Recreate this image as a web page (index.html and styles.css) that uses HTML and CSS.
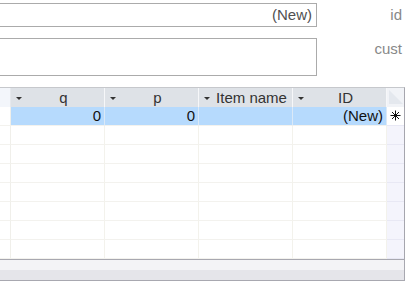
FILE: index.html
```html
<!DOCTYPE html>
<html>
<head>
<meta charset="utf-8">
<link rel="stylesheet" href="styles.css">
</head>
<body>
<div class="form">
  <div class="field field-id">
    <div class="box box-id">(New)</div>
    <div class="label">id</div>
  </div>
  <div class="field field-cust">
    <div class="box box-cust"></div>
    <div class="label">cust</div>
  </div>
</div>
<div class="grid">
  <div class="row head">
    <div class="c rh"></div>
    <div class="c col"><span class="dd"></span><span class="ht">q</span></div>
    <div class="c col"><span class="dd"></span><span class="ht">p</span></div>
    <div class="c col"><span class="dd"></span><span class="ht">Item name</span></div>
    <div class="c col"><span class="dd"></span><span class="ht">ID</span></div>
    <div class="c corner"><svg width="17" height="18" viewBox="0 0 17 18"><polygon points="2,2 16,16 2,16" fill="#e4e8ee"/></svg></div>
  </div>
  <div class="row sel">
    <div class="c rh"></div>
    <div class="c col num">0</div>
    <div class="c col num">0</div>
    <div class="c col num"></div>
    <div class="c col num">(New)</div>
    <div class="c ind"><svg width="11" height="11" viewBox="0 0 11 11"><g stroke="#111" stroke-width="1"><line x1="5.5" y1="0.5" x2="5.5" y2="10.5"/><line x1="0.5" y1="5.5" x2="10.5" y2="5.5"/><line x1="2" y1="2" x2="9" y2="9"/><line x1="9" y1="2" x2="2" y2="9"/></g></svg></div>
  </div>
  <div class="row"><div class="c rh"></div><div class="c col"></div><div class="c col"></div><div class="c col"></div><div class="c col"></div><div class="c rt"></div></div>
  <div class="row"><div class="c rh"></div><div class="c col"></div><div class="c col"></div><div class="c col"></div><div class="c col"></div><div class="c rt"></div></div>
  <div class="row"><div class="c rh"></div><div class="c col"></div><div class="c col"></div><div class="c col"></div><div class="c col"></div><div class="c rt"></div></div>
  <div class="row"><div class="c rh"></div><div class="c col"></div><div class="c col"></div><div class="c col"></div><div class="c col"></div><div class="c rt"></div></div>
  <div class="row"><div class="c rh"></div><div class="c col"></div><div class="c col"></div><div class="c col"></div><div class="c col"></div><div class="c rt"></div></div>
  <div class="row"><div class="c rh"></div><div class="c col"></div><div class="c col"></div><div class="c col"></div><div class="c col"></div><div class="c rt"></div></div>
  <div class="row"><div class="c rh"></div><div class="c col"></div><div class="c col"></div><div class="c col"></div><div class="c col"></div><div class="c rt"></div></div>
  <div class="hscroll"><div class="hs-top"></div><div class="hs-bot"></div></div>
</div>
</body>
</html>
```
FILE: styles.css
```css
* { box-sizing: border-box; }
html, body { margin: 0; padding: 0; background: #fff; }
body {
  font-family: "Liberation Sans", Arial, sans-serif;
  font-size: 15px;
  width: 412px;
  height: 294px;
  overflow: hidden;
}
.form { padding-top: 3px; }
.field { display: flex; align-items: flex-start; }
.field-cust { margin-top: 11px; }
.box {
  width: 317px;
  border: 1px solid #ababab;
  border-left: none;
  background: #fff;
  color: #505050;
  text-align: right;
  padding-right: 4px;
}
.box-id { height: 24px; line-height: 22px; }
.box-cust { height: 38px; }
.label {
  width: 85px;
  text-align: right;
  color: #888;
  padding-top: 3px;
  line-height: 17px;
}
.field-cust .label { padding-top: 2px; }
.grid {
  margin-top: 11px;
  width: 405px;
  border-top: 1px solid #c6c8cc;
  border-right: 1px solid #a6a6ae;
}
.row { display: flex; height: 19px; }
.c { height: 19px; flex: none; }
.rh { width: 11px; border-right: 1px solid #f0efea; border-bottom: 1px solid #f3f2ee; }
.col { width: 94px; border-right: 1px solid #f3f2ec; border-bottom: 1px solid #f3f2ee; }
.rt { width: 17px; background: #f4f4fc; border-bottom: 1px solid #e8e8f4; }
.head .c { border-bottom: none; }
.head .rh { background: #f3f6fb; border-right: 1px solid #e6e9ee; }
.head .col {
  background: #dee2e7;
  border-right: 1px solid #f6f7f9;
  position: relative;
  display: flex;
  align-items: center;
  justify-content: center;
  padding-left: 12px;
  color: #333;
}
.dd {
  position: absolute;
  left: 5px;
  top: 9px;
  width: 0; height: 0;
  border-left: 3px solid transparent;
  border-right: 3px solid transparent;
  border-top: 3px solid #333;
}
.ht { line-height: 19px; }
.corner { width: 17px; background: #f1f3f7; }
.corner svg { display: block; }
.sel .col {
  background: #b6dafd;
  border-right: 1px solid #dbe9f7;
  border-bottom: 1px solid #f3f2ee;
}
.sel .rh { background: #fff; }
.num { text-align: right; padding-right: 3px; line-height: 18px; color: #111; }
.ind {
  width: 17px;
  display: flex;
  align-items: center;
  justify-content: center;
  padding-bottom: 1px;
  border-bottom: 1px solid #e8e8f4;
}
.ind svg { display: block; }
.hscroll {
  height: 22px;
  border-top: 1px solid #a8a8b0;
  border-bottom: 1px solid #a8a8b0;
  margin-right: -1px;
  border-right: 1px solid #a8a8b0;
}
.hs-top { height: 10px; background: #f3f3f6; }
.hs-bot { height: 10px; background: #e5e5ea; }
```
